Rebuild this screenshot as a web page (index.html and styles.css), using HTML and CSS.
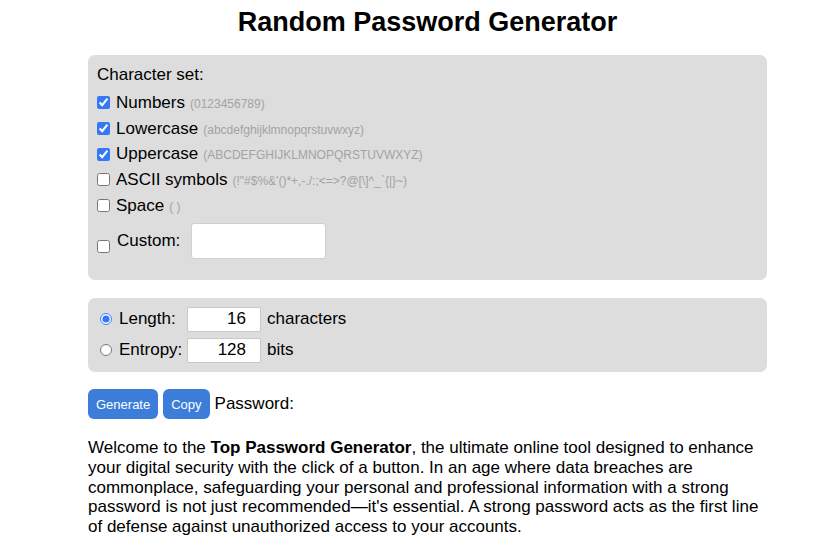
FILE: index.html
```html
<!DOCTYPE html>
<html lang="en">
<head>
<meta charset="utf-8">
<title>Random Password Generator</title>
<link rel="stylesheet" href="styles.css">
</head>
<body>
<main class="page">
  <h1 class="title">Random Password Generator</h1>

  <section class="panel charset">
    <div class="charset-head">Character set:</div>
    <label class="opt"><input type="checkbox" checked><span class="name">Numbers</span><span class="hint">(0123456789)</span></label>
    <label class="opt"><input type="checkbox" checked><span class="name">Lowercase</span><span class="hint">(abcdefghijklmnopqrstuvwxyz)</span></label>
    <label class="opt"><input type="checkbox" checked><span class="name">Uppercase</span><span class="hint">(ABCDEFGHIJKLMNOPQRSTUVWXYZ)</span></label>
    <label class="opt"><input type="checkbox"><span class="name">ASCII symbols</span><span class="hint">(!"#$%&amp;'()*+,-./:;&lt;=&gt;?@[\]^_`{|}~)</span></label>
    <label class="opt"><input type="checkbox"><span class="name">Space</span><span class="hint">( )</span></label>
    <div class="custom">
      <input type="checkbox" class="custom-check">
      <span class="name">Custom:</span>
      <input type="text" class="custom-input">
    </div>
  </section>

  <section class="panel size">
    <div class="size-row">
      <input type="radio" name="mode" checked>
      <span class="size-label">Length:</span>
      <input type="text" class="num" value="16">
      <span class="unit">characters</span>
    </div>
    <div class="size-row">
      <input type="radio" name="mode">
      <span class="size-label">Entropy:</span>
      <input type="text" class="num" value="128">
      <span class="unit">bits</span>
    </div>
  </section>

  <div class="actions">
    <button class="btn">Generate</button>
    <button class="btn">Copy</button>
    <span class="pw-label">Password:</span>
  </div>

  <p class="intro">Welcome to the <b>Top Password Generator</b>, the ultimate online tool designed to enhance your digital security with the click of a button. In an age where data breaches are commonplace, safeguarding your personal and professional information with a strong password is not just recommended—it's essential. A strong password acts as the first line of defense against unauthorized access to your accounts.</p>
</main>
</body>
</html>
```

FILE: styles.css
```css
html, body {
  margin: 0;
  padding: 0;
  background: #ffffff;
}

body {
  font-family: "Liberation Sans", Arial, Helvetica, sans-serif;
  color: #000;
  font-size: 17px;
}

.page {
  width: 679px;
  margin-left: 88px;
}

.title {
  margin: 0;
  padding-top: 5px;
  height: 55px;
  box-sizing: border-box;
  font-size: 27px;
  line-height: 34px;
  font-weight: bold;
  text-align: center;
}

.panel {
  background: #dddddd;
  border-radius: 7px;
  box-sizing: border-box;
}

.charset {
  padding: 10px 9px 21px 9px;
}

.charset-head {
  line-height: 20px;
  margin-bottom: 5px;
}

.opt {
  display: flex;
  align-items: center;
  height: 25.7px;
}

.opt input,
.custom-check {
  width: 13px;
  height: 13px;
  margin: 0 6px 0 0;
  accent-color: #3478f6;
}

.name {
  font-size: 17px;
}

.hint {
  font-size: 12px;
  color: #a3a3a3;
  margin-left: 5px;
  position: relative;
  top: 1px;
}

.custom {
  display: flex;
  align-items: center;
  margin-top: 5px;
}

.custom-check {
  position: relative;
  top: 5px;
}

.custom .name {
  margin-left: 1px;
  margin-right: 11px;
}

.custom-input {
  width: 135px;
  height: 36px;
  box-sizing: border-box;
  border: 1px solid #d0d0d0;
  border-radius: 3px;
  background: #fff;
  outline: none;
  margin: 0;
}

.size {
  margin-top: 18px;
  padding: 9px 0 10px 12px;
  display: flex;
  flex-direction: column;
  gap: 7px;
}

.size-row {
  display: flex;
  align-items: center;
  height: 24px;
}

.size-row input[type="radio"] {
  width: 12px;
  height: 12px;
  margin: 0 7px 0 0;
  accent-color: #3478f6;
}

.size-label {
  width: 68px;
}

.num {
  width: 74px;
  height: 25px;
  box-sizing: border-box;
  border: 1px solid #c8c8c8;
  border-radius: 2px;
  background: #fff;
  margin: 0;
  padding: 0 14px 0 4px;
  text-align: right;
  font-family: inherit;
  font-size: 17px;
  color: #000;
  outline: none;
}

.unit {
  margin-left: 6px;
}

.actions {
  display: flex;
  align-items: center;
  gap: 6px;
  margin-top: 17px;
}

.btn {
  height: 30px;
  padding: 0 8px;
  border: none;
  border-radius: 6px;
  background: #3b7dd8;
  color: #fff;
  font-family: inherit;
  font-size: 13px;
}

.btn + .btn {
  margin-left: -1px;
}

.pw-label {
  font-size: 17px;
  margin-left: -1px;
}

.intro {
  margin: 19px 0 0 0;
  font-size: 17px;
  line-height: 19.6px;
}
```
